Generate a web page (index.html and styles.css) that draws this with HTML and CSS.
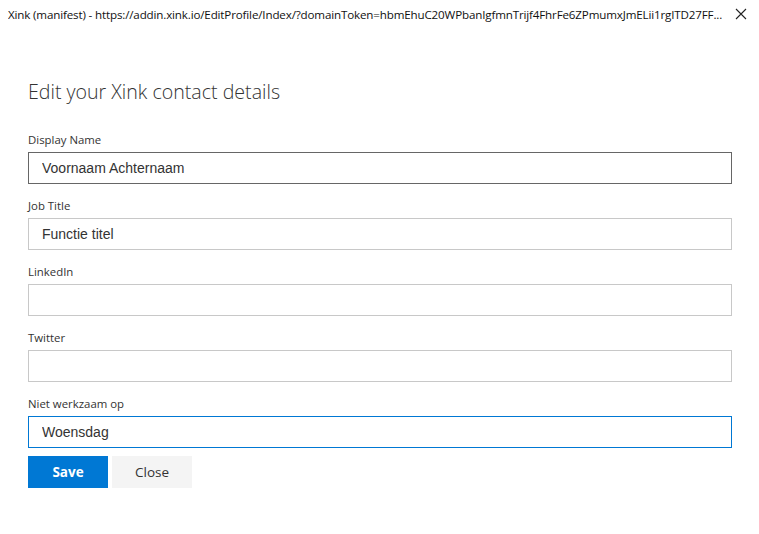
FILE: index.html
```html
<!DOCTYPE html>
<html lang="en">
<head>
    <meta charset="UTF-8">
    <meta name="viewport" content="width=device-width, initial-scale=1.0">
    <title>Xink (manifest)</title>
    <link rel="stylesheet" href="styles.css">
</head>
<body>
    <div class="window">
        <div class="titlebar">
            <span class="title">Xink (manifest) - https://addin.xink.io/EditProfile/Index/?domainToken=hbmEhuC20WPbanIgfmnTrijf4FhrFe6ZPmumxJmELii1rgITD27FF...</span>
            <button class="close-x" aria-label="Close">
                <svg width="12" height="12" viewBox="0 0 12 12"><path d="M1 1L11 11M11 1L1 11" stroke="#222" stroke-width="1.1" fill="none"/></svg>
            </button>
        </div>

        <div class="content">
            <h1>Edit your Xink contact details</h1>

            <div class="field">
                <label for="display-name">Display Name</label>
                <input type="text" id="display-name" class="hover" value="Voornaam Achternaam">
            </div>
            <div class="field">
                <label for="job-title">Job Title</label>
                <input type="text" id="job-title" value="Functie titel">
            </div>
            <div class="field">
                <label for="linkedin">LinkedIn</label>
                <input type="text" id="linkedin" value="">
            </div>
            <div class="field">
                <label for="twitter">Twitter</label>
                <input type="text" id="twitter" value="">
            </div>
            <div class="field">
                <label for="not-working">Niet werkzaam op</label>
                <input type="text" id="not-working" class="focused" value="Woensdag">
            </div>

            <div class="buttons">
                <button class="save">Save</button>
                <button class="close">Close</button>
            </div>
        </div>
    </div>
</body>
</html>
```

FILE: styles.css
```css
html, body { margin: 0; padding: 0; background: #fff; }
body { font-family: "Open Sans", "Noto Sans", sans-serif; color: #333; }

.window { height: 534px; overflow: hidden; }

/* title bar */
.titlebar {
    height: 28px; display: flex; align-items: center; padding: 0 0 0 8px;
}
.title {
    font-size: 11.6px; color: #111; white-space: nowrap; overflow: hidden; flex: 1; letter-spacing: -0.15px;
}
.close-x {
    width: 30px; height: 28px; border: none; background: none; padding: 0; margin-left: 3px;
    display: flex; align-items: center; justify-content: center; margin-right: 3px;
}

/* form */
.content { padding: 50px 27px 0 28px; }
.content h1 {
    margin: 0 0 26px 0; font-size: 19.6px; font-weight: 300; color: #333; line-height: 28px;
}
.field label {
    display: block; font-size: 11.4px; line-height: 16px; color: #333; margin-bottom: 4px;
}
.field input {
    display: block; width: 100%; height: 32px; box-sizing: border-box;
    border: 1px solid #c8c8c8; padding: 0 13px; margin: 0 0 14px 0;
    font-family: "Liberation Sans", Arial, sans-serif; font-size: 14px; color: #333; outline: none;
    background: #fff;
}
.field input.hover { border-color: #666; }
.field input.focused { border-color: #0078d4; margin-bottom: 8px; }

.buttons { display: flex; gap: 4px; }
.buttons button {
    width: 80px; height: 32px; border: none; font-family: "Open Sans", "Noto Sans", sans-serif;
    font-size: 13.5px; cursor: pointer; padding: 0;
}
.buttons .save { background: #0078d4; color: #fff; font-weight: 700; }
.buttons .close { background: #f4f4f4; color: #333; }
```
